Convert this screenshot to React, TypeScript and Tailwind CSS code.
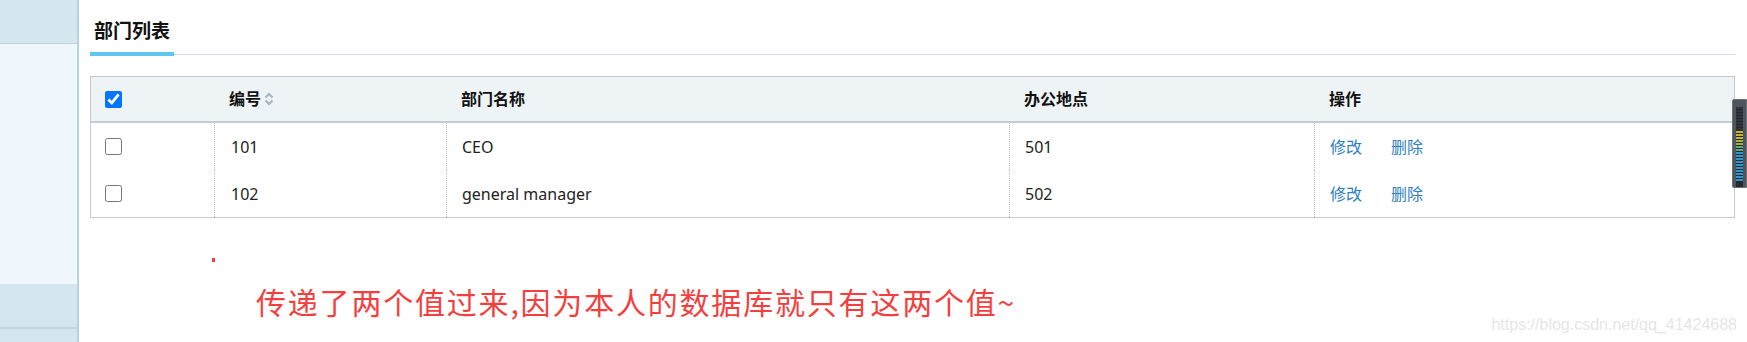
import React from 'react';

const rows = [
  { id: '101', name: 'CEO', loc: '501' },
  { id: '102', name: 'general manager', loc: '502' },
];

const cols = 'grid grid-cols-[123px_232px_563px_305px_1fr]';

function SortIcon() {
  return (
    <svg className="ml-[3px] w-[10px] h-[14px]" viewBox="0 0 10 14" fill="none" stroke="#a7b6c0" strokeWidth={2.2}>
      <path d="M1.5 5.5 L5 2 L8.5 5.5" />
      <path d="M1.5 8.5 L5 12 L8.5 8.5" />
    </svg>
  );
}

function Meter() {
  const segs = [
    ...Array(8).fill('bg-[#30353b]'),
    ...Array(3).fill('bg-[#c9b428]'),
    ...Array(2).fill('bg-[#9fb63a]'),
    ...Array(2).fill('bg-[#5eaa7a]'),
    ...Array(10).fill('bg-[#2c97cf]'),
  ];
  return (
    <div className="absolute right-0 top-[99px] w-[15px] h-[89px] bg-[#4f555c] border border-[#6b7178] rounded-l-[2px] flex justify-center pt-[7px]">
      <div className="w-[7px] flex flex-col gap-[1px] bg-[#25292d]">
        {segs.map((c, i) => (
          <div key={i} className={`h-[2px] ${c}`} />
        ))}
      </div>
    </div>
  );
}

export default function App() {
  return (
    <div className="relative w-[1747px] h-[342px] flex bg-white overflow-hidden font-['Noto_Sans','Noto_Sans_CJK_SC',sans-serif]">
      {/* Sidebar */}
      <aside className="w-[79px] h-full flex flex-col border-r-2 border-[#b4d5e0]">
        <div className="h-[44px] bg-[#d4e6ef] border-b border-[#b9d2dc]" />
        <div className="h-[240px] bg-[#eff7fd]" />
        <div className="h-[45px] bg-[#d4e6ef] border-b-2 border-[#c2d5dd]" />
        <div className="flex-1 bg-[#d4e6ef]" />
      </aside>

      {/* Main */}
      <main className="flex-1 pl-[11px]">
        <div className="w-[1646px] mt-[19px] border-b border-[#d6dee3] flex">
          <div className="px-[4px] pb-[9px] -mb-[2px] border-b-4 border-[#5ec7f0] text-[19px] leading-[24px] font-bold text-[#111]">
            部门列表
          </div>
        </div>

        <div className="mt-[21px] w-[1645px] border border-[#c9c9c9] text-[16px] text-[#222]">
          <div className={`${cols} h-[46px] bg-[#eef3f6] border-b-2 border-[#c2ced6] font-bold text-[#111] items-center`}>
            <div className="pl-[14px] flex items-center">
              <input type="checkbox" defaultChecked className="w-[17px] h-[17px] accent-[#0075ff]" />
            </div>
            <div className="pl-[15px] flex items-center">
              编号
              <SortIcon />
            </div>
            <div className="pl-[15px]">部门名称</div>
            <div className="pl-[15px]">办公地点</div>
            <div className="pl-[15px]">操作</div>
          </div>
          {rows.map((r) => (
            <div key={r.id} className={`${cols} h-[47px] items-stretch`}>
              <div className="pl-[14px] flex items-center">
                <input type="checkbox" className="w-[17px] h-[17px]" />
              </div>
              <div className="pl-[16px] flex items-center border-l border-dotted border-[#bdbdbd]">{r.id}</div>
              <div className="pl-[15px] flex items-center border-l border-dotted border-[#bdbdbd]">{r.name}</div>
              <div className="pl-[15px] flex items-center border-l border-dotted border-[#bdbdbd]">{r.loc}</div>
              <div className="pl-[15px] flex items-center gap-[29px] border-l border-dotted border-[#bdbdbd] text-[#2f7fc1]">
                <span>修改</span>
                <span>删除</span>
              </div>
            </div>
          ))}
        </div>

        <div className="mt-[40px] ml-[122px] w-[3px] h-[4px] bg-[#f53b3b]" />
        <div className="mt-[21px] ml-[166px] text-[30px] leading-[36px] tracking-[1.8px] text-[#f43f3f] font-['Noto_Sans_CJK_SC',sans-serif]">
          传递了两个值过来,因为本人的数据库就只有这两个值~
        </div>
      </main>

      <Meter />

      <div className="absolute right-[10px] bottom-[8px] text-[16px] leading-[18px] text-[#e6e6e6] font-['Liberation_Sans',sans-serif]">
        https://blog.csdn.net/qq_41424688
      </div>
    </div>
  );
}
